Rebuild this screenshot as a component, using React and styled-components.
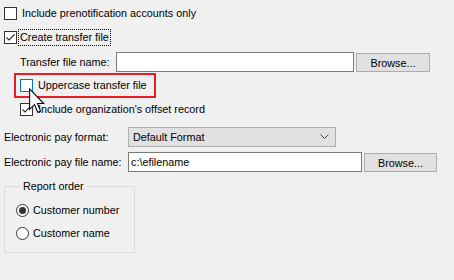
import React from 'react'
import styled, { createGlobalStyle } from 'styled-components'

const Global = createGlobalStyle`
  html, body { margin: 0; padding: 0; background: #f0f0f0; }
  body {
    font-family: "Liberation Sans", Arial, sans-serif;
    font-size: 10.8px;
    color: #000;
  }
`

const Page = styled.div`
  width: 454px;
  height: 280px;
  padding: 0 4px;
  box-sizing: border-box;
  display: flex;
  flex-direction: column;
  overflow: hidden;
  position: relative;
`

const Row = styled.div`
  display: flex;
  align-items: center;
  height: ${p => p.$h || 19}px;
  margin-top: ${p => p.$top || 0}px;
  padding-left: ${p => p.$indent || 0}px;
  white-space: nowrap;
`

const Box = styled.span`
  width: 13px;
  height: 13px;
  box-sizing: border-box;
  border: 1px solid ${p => (p.$hover ? '#0078d7' : '#333')};
  background: #fff;
  display: inline-flex;
  align-items: center;
  justify-content: center;
  flex: none;
`

const Label = styled.span`
  margin-left: ${p => p.$ml ?? 3}px;
  line-height: 15px;
  padding: 0 1px;
  white-space: nowrap;
  border: 1px dotted ${p => (p.$focus ? '#000' : 'transparent')};
`

const FieldLabel = styled.span`
  width: ${p => p.$w}px;
  flex: none;
`

const Input = styled.div`
  width: ${p => p.$w}px;
  height: 20px;
  box-sizing: border-box;
  background: #fff;
  border: 1px solid #7a7a7a;
  display: flex;
  align-items: center;
  padding-left: 2px;
  flex: none;
`

const Button = styled.div`
  width: ${p => p.$w}px;
  height: 19px;
  box-sizing: border-box;
  background: #e1e1e1;
  border: 1px solid #adadad;
  display: flex;
  align-items: center;
  justify-content: center;
  margin-left: ${p => p.$ml || 2}px;
  align-self: flex-start;
  margin-top: 1px;
  flex: none;
`

const Select = styled.div`
  width: 208px;
  height: 20px;
  box-sizing: border-box;
  background: #e1e1e1;
  border: 1px solid #adadad;
  display: flex;
  align-items: center;
  justify-content: space-between;
  padding: 0 6px 0 4px;
  flex: none;
`

const Highlight = styled.div`
  width: 142px;
  height: 25px;
  box-sizing: border-box;
  border: 2px solid #ec1c24;
  margin: 1px 0 0 10px;
  padding-left: 4px;
  display: flex;
  align-items: center;
  white-space: nowrap;
`

const Group = styled.fieldset`
  width: 131px;
  box-sizing: border-box;
  margin: 6px 0 0 0;
  padding: 0 0 7px 11px;
  border: 1px solid #dcdcdc;
  min-width: 0;
`

const Legend = styled.legend`
  padding: 0 3px;
  margin-left: 4px;
  line-height: 16px;
`

const RadioCircle = styled.span`
  width: 13px;
  height: 13px;
  box-sizing: border-box;
  border-radius: 50%;
  border: 1px solid #333;
  background: #fff;
  display: inline-flex;
  align-items: center;
  justify-content: center;
  flex: none;
  &::after {
    content: '';
    width: 7px;
    height: 7px;
    border-radius: 50%;
    background: ${p => (p.$on ? '#333' : 'transparent')};
  }
`

const Cursor = styled.svg`
  position: absolute;
  left: 29px;
  top: 88px;
  pointer-events: none;
`

function Check({ checked, hover }) {
  return (
    <Box $hover={hover}>
      {checked && (
        <svg width="11" height="11" viewBox="0 0 11 11">
          <path d="M1.5 5.5 L4 8 L9.5 2.5" fill="none" stroke="#333" strokeWidth="1.2" />
        </svg>
      )}
    </Box>
  )
}

function Chevron() {
  return (
    <svg width="9" height="6" viewBox="0 0 9 6">
      <path d="M0.5 0.5 L4.5 4.5 L8.5 0.5" fill="none" stroke="#444" strokeWidth="1" />
    </svg>
  )
}

export default function App() {
  return (
    <>
      <Global />
      <Page>
        <Row $top={4}>
          <Check />
          <Label>Include prenotification accounts only</Label>
        </Row>
        <Row $top={5}>
          <Check checked />
          <Label $ml={1} $focus>Create transfer file</Label>
        </Row>
        <Row $top={5} $h={20} $indent={16}>
          <FieldLabel $w={96}>Transfer file name:</FieldLabel>
          <Input $w={238} />
          <Button $w={74}>Browse...</Button>
        </Row>
        <Highlight>
          <Check hover />
          <Label>Uppercase transfer file</Label>
        </Highlight>
        <Row $top={1} $h={21} $indent={16}>
          <Check checked />
          <Label>Include organization's offset record</Label>
        </Row>
        <Row $top={7} $h={20}>
          <FieldLabel $w={124}>Electronic pay format:</FieldLabel>
          <Select>
            <span>Default Format</span>
            <Chevron />
          </Select>
        </Row>
        <Row $top={5} $h={20}>
          <FieldLabel $w={124}>Electronic pay file name:</FieldLabel>
          <Input $w={234}>c:\efilename</Input>
          <Button $w={73}>Browse...</Button>
        </Row>
        <Group>
          <Legend>Report order</Legend>
          <Row $h={23} $top={5}>
            <RadioCircle $on />
            <Label $ml={2}>Customer number</Label>
          </Row>
          <Row $h={23}>
            <RadioCircle />
            <Label $ml={2}>Customer name</Label>
          </Row>
        </Group>
        <Cursor width="16" height="26" viewBox="0 0 12.5 20">
          <path
            d="M0.5 0.5 L0.5 16.5 L4.3 12.8 L6.8 18.8 L9 17.9 L6.6 12 L11.5 12 Z"
            fill="#fff"
            stroke="#000"
            strokeWidth="0.8"
            strokeLinejoin="miter"
          />
        </Cursor>
      </Page>
    </>
  )
}
